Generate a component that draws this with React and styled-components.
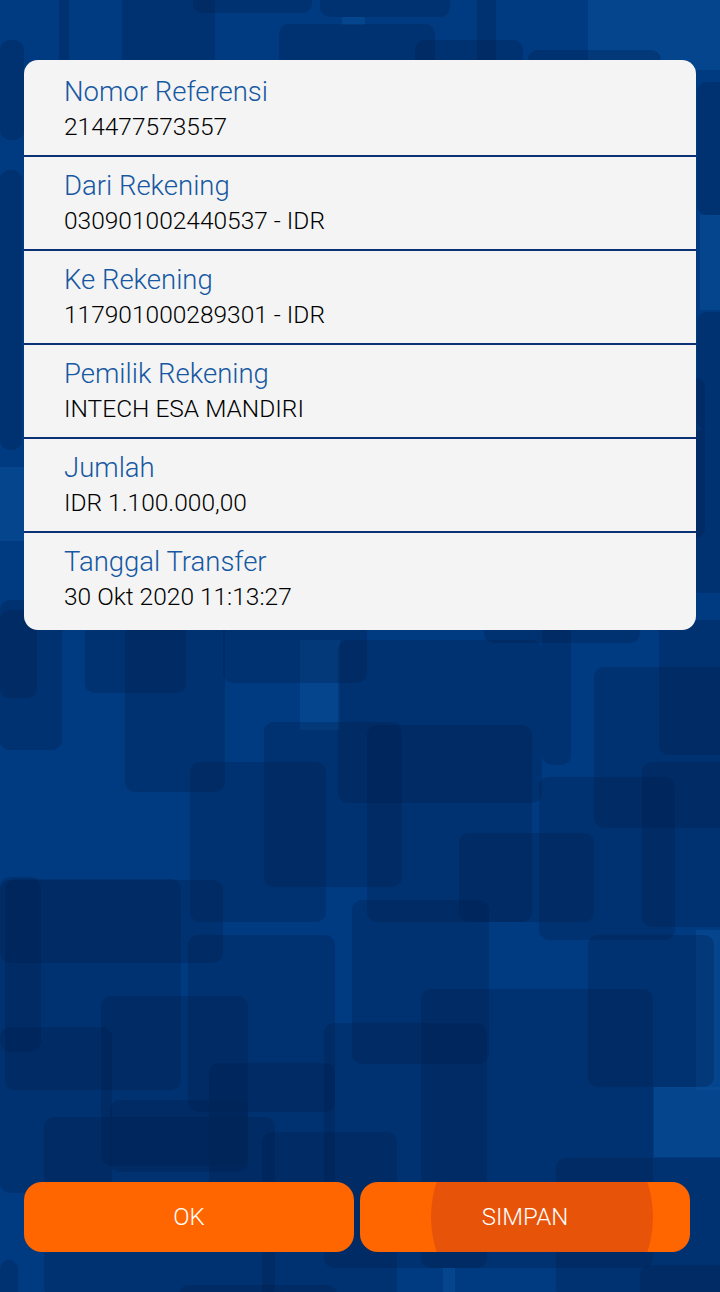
import React from 'react'
import styled, { createGlobalStyle } from 'styled-components'

const GlobalStyle = createGlobalStyle`
  html, body {
    margin: 0;
    padding: 0;
    background: #003a80;
  }
  * {
    box-sizing: border-box;
  }
`

const details = [
  { label: 'Nomor Referensi', value: '214477573557' },
  { label: 'Dari Rekening', value: '030901002440537 - IDR' },
  { label: 'Ke Rekening', value: '117901000289301 - IDR' },
  { label: 'Pemilik Rekening', value: 'INTECH ESA MANDIRI' },
  { label: 'Jumlah', value: 'IDR 1.100.000,00' },
  { label: 'Tanggal Transfer', value: '30 Okt 2020 11:13:27' },
]

// dark translucent tiles of the wallpaper: [x, y, w, h]
const darkTiles = [
  [59, -10, 10, 80], [122, -10, 93, 150], [193, -20, 119, 33], [320, -20, 130, 37],
  [279, 24, 156, 120], [415, 40, 108, 100], [477, -10, 19, 200], [528, 50, 133, 80],
  [0, 40, 24, 100], [0, 170, 22, 280], [697, 82, 40, 133], [697, 312, 40, 118],
  [687, 378, 18, 160], [690, 430, 40, 163],
  [0, 600, 62, 150], [0, 610, 37, 88], [85, 620, 101, 73], [125, 600, 100, 192],
  [223, 610, 144, 73], [190, 762, 136, 160], [264, 722, 138, 165], [367, 725, 165, 197],
  [338, 640, 204, 163], [484, 600, 156, 43], [542, 620, 29, 145], [594, 667, 140, 161],
  [659, 620, 70, 135], [642, 762, 90, 165], [539, 777, 136, 163], [459, 833, 135, 89],
  [352, 900, 137, 164], [0, 877, 41, 175], [5, 879, 176, 211], [0, 880, 223, 83],
  [188, 935, 147, 177], [101, 996, 147, 170], [0, 1027, 112, 166], [209, 1063, 126, 130],
  [324, 1023, 163, 245], [421, 989, 232, 279], [588, 935, 126, 152], [44, 1117, 231, 180],
  [110, 1100, 138, 72], [262, 1132, 135, 170], [556, 1158, 180, 140], [0, 1260, 18, 40],
  [179, 1285, 158, 20], [640, 1265, 90, 40],
]

const lightTiles = [
  [588, -10, 140, 80], [342, 17, 23, 8], [700, 215, 30, 95], [0, 467, 24, 74],
  [300, 640, 40, 90], [654, 1087, 70, 70], [443, 1268, 12, 30], [696, 930, 30, 160],
]

const Wallpaper = () => (
  <Backdrop viewBox='0 0 720 1292' preserveAspectRatio='none'>
    <rect width='720' height='1292' fill='#003a80' />
    {lightTiles.map(([x, y, w, h], i) => (
      <rect key={'l' + i} x={x} y={y} width={w} height={h} fill='#0a5099' opacity='0.5' />
    ))}
    {darkTiles.map(([x, y, w, h], i) => (
      <rect key={'d' + i} x={x} y={y} width={w} height={h} rx='10' fill='#00214f' opacity='0.33' />
    ))}
  </Backdrop>
)

const App = () => (
  <>
    <GlobalStyle />
    <Screen>
      <Wallpaper />
      <Card>
        {details.map(item => (
          <Row key={item.label}>
            <Label>{item.label}</Label>
            <Value>{item.value}</Value>
          </Row>
        ))}
      </Card>
      <Spacer />
      <ButtonBar>
        <ActionButton>OK</ActionButton>
        <ActionButton>
          <Ripple />
          <span>SIMPAN</span>
        </ActionButton>
      </ButtonBar>
    </Screen>
  </>
)

const Screen = styled.div`
  position: relative;
  width: 720px;
  height: 1292px;
  overflow: hidden;
  display: flex;
  flex-direction: column;
  padding: 60px 24px 40px;
  font-family: Roboto, 'Noto Sans', sans-serif;
`

const Backdrop = styled.svg`
  position: absolute;
  top: 0;
  left: 0;
  width: 720px;
  height: 1292px;
  z-index: 0;
`

const Card = styled.div`
  position: relative;
  z-index: 1;
  background: #f4f4f4;
  border-radius: 14px;
  padding: 3px 0 3px;
`

const Row = styled.div`
  height: 94px;
  padding: 14px 40px 0;
  border-bottom: 2px solid #0b3275;

  &:last-child {
    border-bottom: none;
  }
`

const Label = styled.div`
  font-size: 27.5px;
  line-height: 30px;
  font-weight: 300;
  color: #1658a2;
`

const Value = styled.div`
  margin-top: 6px;
  font-size: 24.5px;
  line-height: 28px;
  font-weight: 300;
  color: #000000;
`

const Spacer = styled.div`
  flex: 1;
`

const ButtonBar = styled.div`
  position: relative;
  z-index: 1;
  display: grid;
  grid-template-columns: 330px 330px;
  gap: 6px;
`

const ActionButton = styled.button`
  position: relative;
  overflow: hidden;
  height: 70px;
  border: none;
  border-radius: 18px;
  background: #ff6600;
  color: #ffffff;
  font-family: Roboto, 'Noto Sans', sans-serif;
  font-size: 24px;
  font-weight: 300;
  display: flex;
  align-items: center;
  justify-content: center;
  padding: 0;

  span {
    position: relative;
  }
`

const Ripple = styled.div`
  position: absolute;
  left: 71px;
  top: 50%;
  width: 222px;
  height: 222px;
  margin-top: -111px;
  border-radius: 50%;
  background: #e8530a;
`

export default App
